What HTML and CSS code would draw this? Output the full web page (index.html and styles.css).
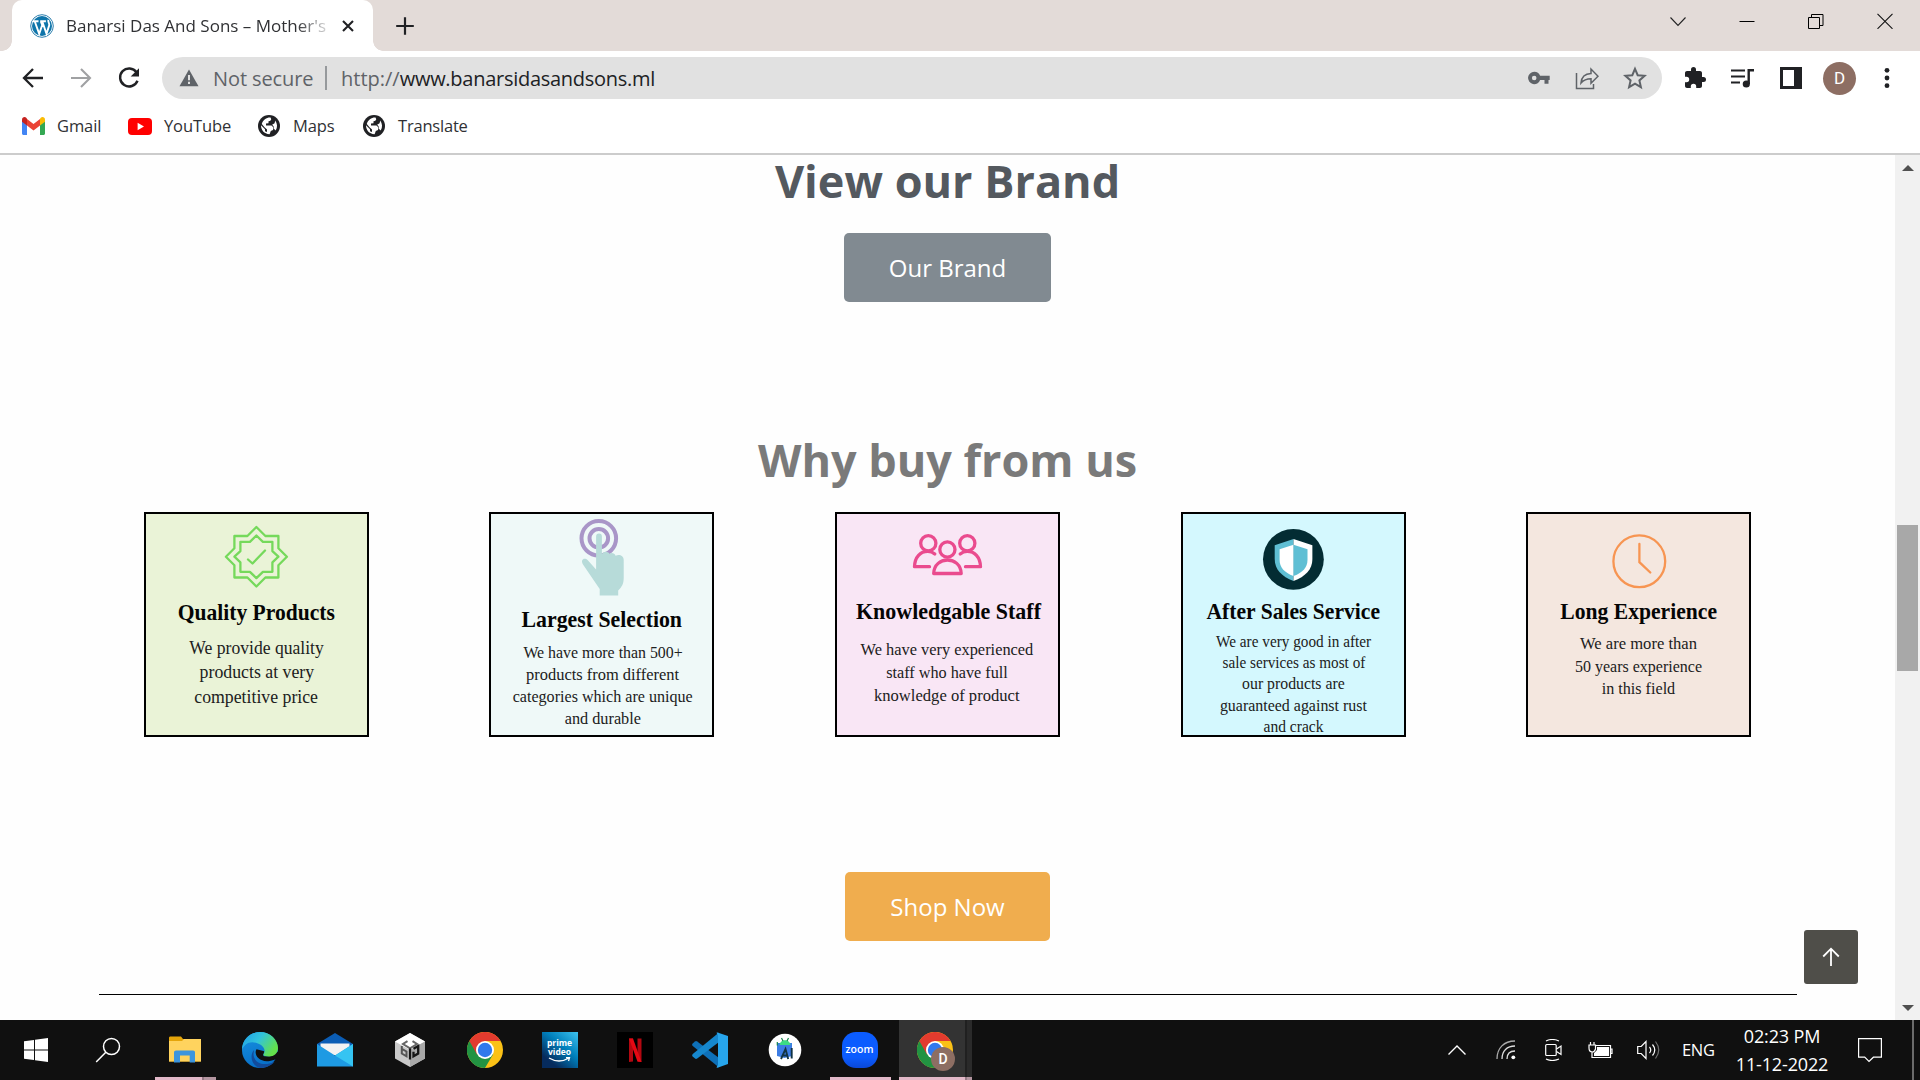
FILE: index.html
```html
<!DOCTYPE html>
<html lang="en">
<head>
<meta charset="utf-8">
<title>Banarsi Das And Sons – Mother's</title>
<link rel="stylesheet" href="styles.css">
</head>
<body>
<div class="screen">
  <header class="tabstrip">
    <div class="tab">
      <svg class="favicon" width="24" height="24" viewBox="0 0 24 24"><circle cx="12" cy="12" r="11.3" fill="#fff" stroke="#2d7fae" stroke-width="1"/><circle cx="12" cy="12" r="10" fill="#0f75aa"/><path d="M2.8 7.3h5.7M10.2 7.3h5.7M4.8 7.5l4.400 12.300 3-8.800-1.400-3.600M12.300 7.500l4.200 12.300 2.700-8.400c.6-2.300-1.600-3.600-.8-5.600" fill="none" stroke="#fff" stroke-width="1.900"/></svg>
      <span class="tab-title">Banarsi Das And Sons – Mother's</span>
      <svg class="tab-close" width="14" height="14" viewBox="0 0 14 14"><path d="M2 2l10 10M12 2L2 12" stroke="#202124" stroke-width="2.100"/></svg>
      <i class="flare left"></i><i class="flare right"></i>
    </div>
    <svg class="new-tab" width="20" height="20" viewBox="0 0 20 20"><path d="M10 1.200v17.600M1.200 10h17.600" stroke="#202124" stroke-width="2.200"/></svg>
    <div class="window-controls">
      <svg width="16" height="16" viewBox="0 0 16 16"><path d="M.5 4.500l7.500 8 7.500-8" fill="none" stroke="#222" stroke-width="1.100"/></svg>
      <svg width="16" height="16" viewBox="0 0 16 16"><path d="M.5 8.500h15" stroke="#000"/></svg>
      <svg width="16" height="16" viewBox="0 0 16 16"><path d="M.5 4.500h11v11h-11zM3.500 4.500v-3h11.500v11h-3.500" fill="none" stroke="#000"/></svg>
      <svg width="16" height="16" viewBox="0 0 16 16"><path d="M.5 .8l15 15M15.500 .8l-15 15" stroke="#111" stroke-width="1.100"/></svg>
    </div>
  </header>

  <div class="toolbar">
    <div class="nav">
      <svg width="24" height="24" viewBox="0 0 24 24"><path d="M22 12H3M12 3l-9 9 9 9" fill="none" stroke="#202124" stroke-width="2.300"/></svg>
      <svg width="24" height="24" viewBox="0 0 24 24"><path d="M2 12h19M12 3l9 9-9 9" fill="none" stroke="#a0a1a3" stroke-width="2.100"/></svg>
      <svg width="24" height="24" viewBox="0 0 24 24"><path d="M19.500 6.300A9 9 0 1 0 20.500 14.700" fill="none" stroke="#202124" stroke-width="2.400"/><path d="M22 2.200v8.300h-8.300z" fill="#202124"/></svg>
    </div>
    <div class="omnibox">
      <svg class="warn" width="20" height="18" viewBox="0 0 20 18"><path d="M10 .5L19.500 17.300H.5z" fill="#5f6368"/><path d="M10 6v5.300M10 12.800v2.300" stroke="#e1e1e1" stroke-width="2"/></svg>
      <span class="not-secure">Not secure</span>
      <span class="divider"></span>
      <span class="url"><span class="scheme">http://</span>www.banarsidasandsons.ml</span>
      <div class="omni-icons">
        <svg width="24" height="24" viewBox="0 0 24 24"><path fill-rule="evenodd" d="M7.200 5.800a6.200 6.200 0 0 1 5.900 4H22.700v4.200h-1.200v3.800h-4v-3.800h-4.400A6.200 6.200 0 1 1 7.200 5.800zm0 3.900a2.300 2.300 0 1 0 0 4.600 2.300 2.300 0 0 0 0-4.600z" fill="#5f6368"/></svg>
        <svg width="24" height="24" viewBox="0 0 24 24"><path d="M1.500 7v15.500h17V18M6 17c.5-6 4-9.300 10-9.500V3l7 7.200-7 7v-4.500c-4.500 0-7.500 1.300-10 4.300z" fill="none" stroke="#5f6368" stroke-width="1.500"/></svg>
        <svg width="24" height="24" viewBox="0 0 24 24"><path d="M12 2.800l2.700 6.400 6.900.6-5.200 4.600 1.500 6.700-5.900-3.500-5.900 3.500 1.500-6.700-5.200-4.600 6.900-.6z" fill="none" stroke="#5f6368" stroke-width="2"/></svg>
      </div>
    </div>
    <div class="actions">
      <svg width="24" height="24" viewBox="0 0 24 24"><path d="M20.500 11H19V7c0-1.100-.9-2-2-2h-4V3.500a2.500 2.500 0 0 0-5 0V5H4c-1.100 0-2 .9-2 2v3.800h1.500a2.700 2.700 0 0 1 0 5.400H2V20c0 1.100.9 2 2 2h3.800v-1.500a2.700 2.700 0 0 1 5.400 0V22H17c1.100 0 2-.9 2-2v-4h1.500a2.500 2.500 0 0 0 0-5z" fill="#202124"/></svg>
      <svg width="26" height="24" viewBox="0 0 26 24"><path d="M2 4.500h14M2 10.500h14M2 16.500h9" stroke="#202124" stroke-width="2.200"/><path d="M19.700 18V4.300h5.300" fill="none" stroke="#202124" stroke-width="2.400"/><circle cx="17.300" cy="18" r="3.600" fill="#202124"/></svg>
      <svg width="22" height="22" viewBox="0 0 22 22"><path fill-rule="evenodd" d="M0 0h22v22H0zM3 3v16h11V3z" fill="#202124"/></svg>
      <span class="avatar">D</span>
      <svg width="6" height="22" viewBox="0 0 6 22"><g fill="#202124"><circle cx="3" cy="3.300" r="2.400"/><circle cx="3" cy="11" r="2.400"/><circle cx="3" cy="18.700" r="2.400"/></g></svg>
    </div>
  </div>

  <nav class="bookmarks">
    <a class="bm gmail"><svg width="23" height="18" viewBox="0 0 23 18"><path d="M0 3v13.500C0 17.300.7 18 1.500 18H5V7z" fill="#4285f4"/><path d="M18 7v11h3.500c.8 0 1.500-.7 1.500-1.500V3z" fill="#34a853"/><path d="M18 2v6.500L23 4.700V2.800C23 .3 20.300-.8 18.500 1z" fill="#fbbc04"/><path d="M5 8.500V2l6.500 5L18 2v6.500l-6.500 5z" fill="#ea4335"/><path d="M0 2.800v1.900l5 3.800V2l-.5-1C2.700-.8 0 .3 0 2.800z" fill="#c5221f"/></svg><span>Gmail</span></a>
    <a class="bm youtube"><svg width="24" height="17" viewBox="0 0 24 17"><rect width="24" height="17" rx="4" fill="#f00"/><path d="M9.600 4.800l6.400 3.700-6.400 3.700z" fill="#fff"/></svg><span>YouTube</span></a>
    <a class="bm maps"><svg width="22" height="22" viewBox="0 0 22 22"><circle cx="11" cy="11" r="11" fill="#202124"/><path d="M12.500 2.600l.7 1.300c0 1.300-.8 2-2.700 2.300v2l-2.500.4v2h5.500l1.500 1.500v3l-2.200.8-1.200 3.300C6 19 3 15 3 10.300l4 4v2l2 .7v-2.500l-2.500-2.200-2.700-3.200C5 5 8.500 2.400 12.500 2.600zM17.200 5.500c2.200 3 2.500 7 .5 10l-1.200-1.200h-.9v-3l-1.500-1.500 2.500-1.500z" fill="#fff"/></svg><span>Maps</span></a>
    <a class="bm translate"><svg width="22" height="22" viewBox="0 0 22 22"><circle cx="11" cy="11" r="11" fill="#202124"/><path d="M12.500 2.600l.7 1.300c0 1.300-.8 2-2.700 2.300v2l-2.500.4v2h5.500l1.500 1.500v3l-2.200.8-1.200 3.300C6 19 3 15 3 10.300l4 4v2l2 .7v-2.500l-2.500-2.200-2.700-3.200C5 5 8.500 2.400 12.500 2.600zM17.200 5.500c2.200 3 2.500 7 .5 10l-1.200-1.200h-.9v-3l-1.500-1.500 2.500-1.500z" fill="#fff"/></svg><span>Translate</span></a>
  </nav>

  <div class="viewport">
    <main class="page">
      <h2 class="heading brand-heading">View our Brand</h2>
      <a class="button brand-button">Our Brand</a>
      <h2 class="heading why-heading">Why buy from us</h2>
      <section class="cards">
        <svg class="card quality" viewBox="0 0 225 225">
          <g fill="none" stroke="#75d95b" stroke-width="2.300" stroke-linejoin="round">
            <path d="M112.400 15l9 9h13v12.200l8.500 8.500-8.500 8.500v12.300h-13l-9 9-9-9h-13V53.200l-8.500-8.500 8.500-8.500V24h13z"/>
            <path d="M112.400 23.500l6.500 6.300h9.500v9.300l6 5.600-6 5.600v9.500h-9.500l-6.500 6.300-6.500-6.300h-9.500v-9.500l-6-5.600 6-5.600v-9.300h9.500z"/>
            <path d="M104 47.500l4.500 4 12.500-13" stroke-linecap="round"/>
          </g>
          <g class="card-title"><text x="33.800" y="108" textLength="157" lengthAdjust="spacingAndGlyphs">Quality Products</text></g>
          <g class="card-copy large">
            <text x="45.300" y="141.700" textLength="134.500" lengthAdjust="spacingAndGlyphs">We provide quality</text>
            <text x="55.600" y="166" textLength="114.500" lengthAdjust="spacingAndGlyphs">products at very</text>
            <text x="50.300" y="190.700" textLength="123.700" lengthAdjust="spacingAndGlyphs">competitive price</text>
          </g>
        </svg>
        <svg class="card selection" viewBox="0 0 225 225">
          <g fill="none" stroke="#a996c8" stroke-width="4"><circle cx="109.800" cy="26.300" r="17.300"/><circle cx="109.800" cy="26.300" r="9.300"/></g>
          <path d="M107.100 24.500a2.900 2.900 0 0 1 5.800 0V42c2-3 6-3 7.500-.3 2.600-1.600 5.200-.4 6.200 2 3.600-2 8.100 0 8.100 4V66c0 6-2 9-5.500 12.500V83.500H110.700V77L94 52.500c-3-5 1.500-7.500 4.800-4.200l8.300 9.200z" fill="#b7dbd9"/>
          <g class="card-title"><text x="32.500" y="115.300" textLength="160.500" lengthAdjust="spacingAndGlyphs">Largest Selection</text></g>
          <g class="card-copy">
            <text x="34.400" y="146.300" textLength="159.300" lengthAdjust="spacingAndGlyphs">We have more than 500+</text>
            <text x="37.100" y="168.300" textLength="153" lengthAdjust="spacingAndGlyphs">products from different</text>
            <text x="23.700" y="190.300" textLength="180" lengthAdjust="spacingAndGlyphs">categories which are unique</text>
            <text x="75.700" y="212.300" textLength="76.300" lengthAdjust="spacingAndGlyphs">and durable</text>
          </g>
        </svg>
        <svg class="card staff" viewBox="0 0 225 225">
          <g fill="none" stroke="#ea4b8e" stroke-width="3.300" stroke-linecap="round" stroke-linejoin="round">
            <circle cx="93.300" cy="31.300" r="7.600"/><circle cx="132.300" cy="31.300" r="7.600"/><circle cx="112.400" cy="37.500" r="7.600"/>
            <path d="M94.500 54.700H79.500c.3-10 6-15.300 13.300-15.300q4 0 7 2.500M130.500 54.700h15c-.3-10-6-15.300-13.300-15.300q-4 0-7 2.500M98.700 61.500c.5-18 27-18 27.500 0z"/>
          </g>
          <g class="card-title"><text x="21" y="107" textLength="185" lengthAdjust="spacingAndGlyphs">Knowledgable Staff</text></g>
          <g class="card-copy">
            <text x="25.600" y="143.300" textLength="172.700" lengthAdjust="spacingAndGlyphs">We have very experienced</text>
            <text x="51.200" y="166.300" textLength="121.700" lengthAdjust="spacingAndGlyphs">staff who have full</text>
            <text x="39" y="189" textLength="145.500" lengthAdjust="spacingAndGlyphs">knowledge of product</text>
          </g>
        </svg>
        <svg class="card service" viewBox="0 0 225 225">
          <circle cx="112.400" cy="47.300" r="30.400" fill="#032c33"/>
          <path d="M112.500 27L93.700 33.300V47c0 10.500 7 17.500 18.800 22z" fill="#5fbfd4"/>
          <path d="M112.500 27l18.900 6.300V47c0 10.500-7 17.500-18.900 22z" fill="#fff"/>
          <path d="M112.500 32.700l-13.900 4.500v10.500c0 7.500 4.500 12.800 13.900 16.300z" fill="#fff"/>
          <path d="M112.500 32.700l14 4.500v10.500c0 7.500-4.500 12.800-14 16.300z" fill="#5fbfd4"/>
          <g class="card-title"><text x="25.500" y="106.700" textLength="173.500" lengthAdjust="spacingAndGlyphs">After Sales Service</text></g>
          <g class="card-copy">
            <text x="35.100" y="134.700" textLength="155" lengthAdjust="spacingAndGlyphs">We are very good in after</text>
            <text x="41.600" y="156" textLength="142.700" lengthAdjust="spacingAndGlyphs">sale services as most of</text>
            <text x="61.100" y="177.300" textLength="102.600" lengthAdjust="spacingAndGlyphs">our products are</text>
            <text x="38.900" y="198.700" textLength="147" lengthAdjust="spacingAndGlyphs">guaranteed against rust</text>
            <text x="82.500" y="219.700" textLength="60" lengthAdjust="spacingAndGlyphs">and crack</text>
          </g>
        </svg>
        <svg class="card experience" viewBox="0 0 225 225">
          <g fill="none" stroke="#f79552" stroke-width="2.300" stroke-linecap="round"><circle cx="113.300" cy="49.300" r="25.900"/><path d="M113.400 32v18.200l10.900 10.300"/></g>
          <g class="card-title"><text x="34.300" y="106.700" textLength="156.700" lengthAdjust="spacingAndGlyphs">Long Experience</text></g>
          <g class="card-copy">
            <text x="54" y="137.300" textLength="117" lengthAdjust="spacingAndGlyphs">We are more than</text>
            <text x="49" y="160" textLength="127" lengthAdjust="spacingAndGlyphs">50 years experience</text>
            <text x="75.700" y="182.300" textLength="73.500" lengthAdjust="spacingAndGlyphs">in this field</text>
          </g>
        </svg>
      </section>
      <a class="button shop-button">Shop Now</a>
      <hr class="rule">
      <a class="to-top"><svg width="18" height="20" viewBox="0 0 18 20"><path d="M9 19V2M1.200 9.500L9 1.700l7.800 7.800" fill="none" stroke="#fff" stroke-width="1.800"/></svg></a>
    </main>
    <div class="scrollbar">
      <svg width="12" height="6" viewBox="0 0 12 6"><path d="M0 6L6 0l6 6z" fill="#505050"/></svg>
      <span class="thumb"></span>
      <svg class="down" width="12" height="6" viewBox="0 0 12 6"><path d="M0 0l6 6 6-6z" fill="#505050"/></svg>
    </div>
  </div>

  <footer class="taskbar">
    <div class="slot system"><svg width="24" height="24" viewBox="0 0 24 24"><path d="M0 3.300L10 2v9.500H0zM11 1.800L24 0v11.500H11zM0 12.500h10V22L0 20.700zM11 12.500h13V24l-13-1.800z" fill="#fff"/></svg></div>
    <div class="slot system"><svg width="26" height="26" viewBox="0 0 26 26"><circle cx="16.500" cy="9.500" r="8" fill="none" stroke="#fff" stroke-width="1.500"/><path d="M10.800 15.300L1.200 25" stroke="#fff" stroke-width="1.500"/></svg></div>
    <div class="apps">
      <div class="slot explorer"><svg width="32" height="28" viewBox="0 0 32 28"><path d="M0 2C0 1 .5.500 1.500.500H12l2 2.500h17c.7 0 1 .5 1 1v21.500H0z" fill="#e5a50a"/><path d="M0 5h13l2-2h17v22.500H0z" fill="#ffd35e"/><path d="M5 26.500V16.500c0-1.300.8-2 2-2h17c1.300 0 2 .7 2 2v10h-5.300V19.500H11v7z" fill="#3d95dd"/></svg></div>
      <div class="slot"><svg width="36" height="36" viewBox="0 0 36 36"><defs><linearGradient id="edgeTop" x1="0" x2="1" y2=".5"><stop stop-color="#1c9be8"/><stop offset=".5" stop-color="#32c4db"/><stop offset="1" stop-color="#63e14c"/></linearGradient><linearGradient id="edgeSide" y2="1" x2=".3"><stop stop-color="#1792e0"/><stop offset="1" stop-color="#0870c9"/></linearGradient></defs><circle cx="18" cy="18" r="18" fill="url(#edgeSide)"/><path d="M11.500 22c0 8 9 13.500 21.500 7.500C29 34 23 36 18 36 10 34 7 24 12 18z" fill="#124b9b"/><path d="M14.500 17.200c-3 5 2 13 12 12 3.500-.3 5.500-1.300 7.300-2.200L31.500 31 37 26v-7l-8.500 5.200H22c-1.800-1 0-2.500.2-5z" fill="#101010"/><path d="M0 18C0 7 8.500 0 18 0c10 0 18 7.500 18 16 0 5-4 8.500-9 8.500-4.500 0-6.300-1-5.300-2.400 2-2.900 1-8.100-5.700-10.600C8 8 2 12 0 18z" fill="url(#edgeTop)"/></svg></div>
      <div class="slot"><svg width="36" height="34" viewBox="0 0 36 34"><path d="M0 11L18 0l18 11v5H0z" fill="#0b5db5"/><path d="M3.500 10.500h29V22h-29z" fill="#f2f2f2"/><path d="M0 11l18 11.500L36 11v22.500H0z" fill="#1e9ae3"/><path d="M18 22.500L36 11v22.500z" fill="#35c4f2"/></svg></div>
      <div class="slot"><svg width="30" height="34" viewBox="0 0 30 34"><path d="M15 0l15 8.500v17L15 34 0 25.500v-17z" fill="#c9c9c9"/><path d="M15 0l15 8.500L15 17 0 8.500z" fill="#fff"/><path d="M15 17l15-8.500v17L15 34z" fill="#a8a8a8"/><path d="M12.500 8.200L8 11l7 4.300 7-4.300-4.500-2.800" fill="none" stroke="#666" stroke-width="2"/><path d="M6.800 13v7.500l4.700 2.800v-4.800l-4.700-2.700" fill="none" stroke="#555" stroke-width="2"/><path d="M15 15.500v11M18.500 18.800v4.500l4.700-2.800V13l-4.700 2.700" fill="none" stroke="#151515" stroke-width="2.300"/></svg></div>
      <div class="slot"><svg width="36" height="36" viewBox="0 0 36 36"><circle cx="18" cy="18" r="18" fill="#fbc116"/><path d="M2.400 9A18 18 0 0 0 18 36l8-13.500-8-4.500z" fill="#229342"/><path d="M2.400 9A18 18 0 0 1 33.600 9H18l-8 13.500z" fill="#e33b2e"/><circle cx="18" cy="18" r="9" fill="#fff"/><circle cx="18" cy="18" r="7.200" fill="#3079ed"/></svg></div>
      <div class="slot"><div class="prime"><span>prime</span><span>video</span><svg width="24" height="6" viewBox="0 0 24 6"><path d="M1 1q10 6 20 0M18 .7h3.500L20.500 4" fill="none" stroke="#fff" stroke-width="1.300"/></svg></div></div>
      <div class="slot"><svg width="36" height="36" viewBox="0 0 36 36"><path d="M0 0h36v36H0z" fill="#000"/><path d="M12 6.500h4v23l-4 .5zM20.500 6.500h4V30l-4-.5z" fill="#b20710"/><path d="M12 6.500h4L24.500 30l-4-.5z" fill="#e50914"/></svg></div>
      <div class="slot"><svg width="36" height="36" viewBox="0 0 36 36"><path d="M.7 11.500L3 9.500q1-.8 2.200 0L27 26v9.500L.8 14q-1.300-1.300-.1-2.500z" fill="#0e70b8"/><path d="M.7 24.500L3 26.500q1 .8 2.200 0L27 10V.5L.8 22q-1.300 1.300-.1 2.500z" fill="#1687cd"/><path d="M25.500.5L36 4v28l-10.500 3.700c-1 .3-1.500 0 .5-2.700V3c-2-2.500-1.500-2.800-.5-2.500z" fill="#27a5ec"/></svg></div>
      <div class="slot"><svg width="34" height="34" viewBox="0 0 34 34"><circle cx="17" cy="17" r="16.300" fill="#fff"/><path d="M9 10h15v13l-7.500 2L9 23z" fill="#3d7de4"/><path d="M11.500 12c.5-6.500 10.500-6.500 11 0z" fill="#3ddc84"/><path d="M13.500 5l1.500 3M20.500 5L19 8M9.300 9v3.500" stroke="#17864b" stroke-width="1.200"/><path d="M13 26l4.500-10 2.700 10M15 22.500h4.500M23.700 15v10.500" stroke="#113344" stroke-width="1.900" fill="none"/></svg></div>
      <div class="slot zoom"><span class="zoom-logo">zoom</span></div>
      <div class="slot chrome-active"><svg width="36" height="36" viewBox="0 0 36 36"><circle cx="18" cy="18" r="18" fill="#fbc116"/><path d="M2.400 9A18 18 0 0 0 18 36l8-13.500-8-4.500z" fill="#229342"/><path d="M2.400 9A18 18 0 0 1 33.600 9H18l-8 13.500z" fill="#e33b2e"/><circle cx="18" cy="18" r="9" fill="#fff"/><circle cx="18" cy="18" r="7.200" fill="#3079ed"/></svg><span class="profile-badge">D</span></div>
    </div>
    <div class="tray">
      <svg class="t-up" width="18" height="10" viewBox="0 0 18 10"><path d="M.5 9.500L9 1l8.500 8.500" fill="none" stroke="#fff" stroke-width="1.400"/></svg>
      <svg class="t-wifi" width="20" height="20" viewBox="0 0 20 20"><g fill="none" stroke="#ddd" stroke-width="1.300"><path d="M1 19C1 8 8 1 19 1" opacity=".75"/><path d="M6 19c0-8 5-13 13-13M11 19c0-5 3-8 8-8"/></g><circle cx="17.300" cy="17.300" r="1.900" fill="#fff"/></svg>
      <svg class="t-meet" width="17" height="22" viewBox="0 0 17 22"><g fill="none" stroke="#fff" stroke-width="1.200"><rect x=".7" y="5.500" width="10.500" height="11" rx="1"/><path d="M11.500 10l4.500-3v8.500l-4.500-3M1 2q6-3 13 0M1 20q6 3 13 0"/></g></svg>
      <svg class="t-batt" width="25" height="17" viewBox="0 0 25 17"><path d="M8 3.500h14.500v12H4V10M22.500 7h1.500v4.500h-1.500M2.500 0v3M6 0v3M1 3h6.500v4q-1 3-3.200 3Q1 10 1 6z" fill="none" stroke="#fff" stroke-width="1.200"/><path d="M9 5h12v9H6v-3l3-3z" fill="#fff"/></svg>
      <svg class="t-sound" width="23" height="20" viewBox="0 0 23 20"><g fill="none" stroke="#fff" stroke-width="1.200"><path d="M.7 6.500h3.500L9 1.500v17L4.200 13.500H.7zM12.500 7q2.500 3 0 6M15.500 4.500q4.500 5.500 0 11"/><path d="M18.500 1.500q6.500 8.500 0 17" opacity=".4"/></g></svg>
      <span class="lang">ENG</span>
      <div class="clock"><span>02:23 PM</span><span class="date">11-12-2022</span></div>
      <svg class="t-note" width="24" height="25" viewBox="0 0 24 25"><path d="M.6.600h22.800v18.600h-8L11 23.500l-4.300-4.300H.6z" fill="none" stroke="#fff" stroke-width="1.200"/></svg>
      <span class="show-desktop"></span>
    </div>
  </footer>
</div>
</body>
</html>
```
FILE: styles.css
```css
* { box-sizing: border-box; }
body { margin: 0; font-family: "Open Sans", "Noto Sans", sans-serif; background: #fff; overflow: hidden; }
svg { display: block; flex: none; }
.screen { width: 1920px; height: 1080px; display: flex; flex-direction: column; overflow: hidden; }

/* Tab strip */
.tabstrip { height: 51px; flex: none; background: #e3dbd8; display: flex; align-items: center; padding-left: 12px; }
.tab { position: relative; width: 361px; height: 51px; background: #fff; border-radius: 10px 10px 0 0; display: flex; align-items: center; padding-left: 18px; }
.tab-title { width: 262px; margin-left: 12px; font-size: 17px; color: #303134; white-space: nowrap; overflow: hidden; -webkit-mask-image: linear-gradient(90deg, #000 88%, transparent 102%); mask-image: linear-gradient(90deg, #000 88%, transparent 102%); }
.tab-close { margin-left: 13px; }
.flare { position: absolute; bottom: 0; width: 10px; height: 10px; }
.flare.left { left: -10px; background: radial-gradient(circle at 0 0, transparent 9.500px, #fff 10px); }
.flare.right { right: -10px; background: radial-gradient(circle at 100% 0, transparent 9.500px, #fff 10px); }
.new-tab { margin-left: 22px; }
.window-controls { margin: 0 27px 9px auto; display: flex; gap: 53px; }

/* Address row */
.toolbar { height: 54px; flex: none; display: flex; align-items: center; background: #fff; }
.nav { display: flex; gap: 24px; padding-left: 21px; width: 162px; }
.omnibox { width: 1500px; height: 42px; border-radius: 21px; background: #e1e1e1; display: flex; align-items: center; padding: 0 15px 0 17px; font-size: 20px; white-space: nowrap; }
.not-secure { width: 100px; margin-left: 14px; color: #5f6368; letter-spacing: -.1px; }
.divider { width: 2px; height: 24px; margin: 0 14px 0 12px; background: #96999c; }
.url { color: #202124; letter-spacing: -.27px; }
.scheme { color: #5f6368; letter-spacing: 0; }
.omni-icons { margin-left: auto; display: flex; gap: 24px; }
.actions { display: flex; align-items: center; flex: 1; padding-left: 21px; }
.actions svg:nth-child(2) { margin-left: 22px; }
.actions svg:nth-child(3) { margin-left: 25px; }
.actions svg:nth-child(5) { margin-left: 28px; }
.avatar { width: 33px; height: 33px; margin-left: 21px; border-radius: 50%; background: #8d6e63; color: #fff; font: 17px/33px Roboto, sans-serif; text-align: center; }

/* Bookmarks */
.bookmarks { height: 50px; flex: none; display: flex; align-items: center; padding: 0 0 6px 22px; background: #fff; border-bottom: 2px solid #ccc; font-size: 16.500px; color: #303134; }
.bm { display: flex; align-items: center; gap: 12px; letter-spacing: -.1px; }
.bm span { padding-bottom: 2px; }
.gmail { width: 106px; }
.youtube { width: 130px; }
.maps { width: 105px; gap: 13px; }
.translate { gap: 13px; letter-spacing: -.2px; }

/* Web page */
.viewport { height: 865px; flex: none; display: flex; }
.page { position: relative; width: 1895px; background: #fefefe; display: flex; flex-direction: column; align-items: center; overflow: hidden; }
.heading { margin: 0; font-size: 45px; line-height: 54px; font-weight: 700; }
.brand-heading { line-height: 51px; color: #54595f; }
.why-heading { margin-top: 131px; color: #7a7a7a; }
.button { height: 69px; border-radius: 5px; color: #fff; font-size: 24px; line-height: 69px; text-align: center; flex: none; }
.brand-button { width: 207px; margin-top: 27px; background: #818a91; }
.shop-button { width: 205px; margin-top: 135px; background: #f0ad4e; }
.cards { width: 1607px; margin-top: 25px; display: grid; grid-template-columns: 345px 346px 346px 345px 225px; margin-right: 1px; }
.card { width: 225px; height: 225px; outline: 2px solid #000; outline-offset: -2px; }
.quality { background: #eaf3d7; }
.selection { background: #eff9f8; }
.staff { background: #f9e6f5; }
.service { background: #d4f8fe; }
.experience { background: #f4e7df; }
.card text { font-family: "Liberation Serif", serif; }
.card-title { font-size: 23px; font-weight: 700; fill: #050505; }
.card-copy { font-size: 17.500px; fill: #202020; }
.card-copy.large { font-size: 19px; }
.rule { width: 1698px; height: 1px; margin: 53px 0 0; border: 0; background: #000; flex: none; }
.to-top { position: absolute; right: 37px; bottom: 36px; width: 54px; height: 54px; border-radius: 3px; background: #4f4e49; display: flex; align-items: center; justify-content: center; }
.scrollbar { width: 25px; background: #f1f1f1; display: flex; flex-direction: column; align-items: center; padding: 10px 0 9px; }
.thumb { width: 21px; height: 146px; margin-top: 354px; background: #a8a8a8; }
.down { margin-top: auto; }

/* Taskbar */
.taskbar { height: 60px; flex: none; background: #101010; display: flex; color: #fff; }
.slot { width: 75px; height: 60px; display: flex; align-items: center; justify-content: center; position: relative; flex: none; }
.slot.system { width: 72px; }
.apps { display: flex; margin-left: 3px; }
.explorer { background: linear-gradient(90deg, #e2b8c8 47px, #967a85 47px 48.500px, #b496a1 48.500px) 8px 57px / 61px 3px no-repeat; }
.zoom { background: linear-gradient(#e2b8c8, #e2b8c8) 8px 57px / 61px 3px no-repeat; }
.chrome-active { background: linear-gradient(90deg, #e2b8c8 66px, #967a85 66px 68px, #b496a1 68px) 2px 57px / 73px 3px no-repeat, linear-gradient(90deg, #333 66px, #202020 66px 68px, #2a2a2a 68px) 2px 0 / 73px 60px no-repeat; }
.prime { width: 36px; height: 36px; display: flex; flex-direction: column; align-items: center; padding-top: 6px; background: linear-gradient(40deg, #062b5d 20%, #0081bd 60%, #3dc2ee); font: 700 8.500px/9px "Open Sans", sans-serif; }
.prime svg { margin-top: 1px; }
.zoom-logo { width: 36px; height: 36px; border-radius: 14px; background: linear-gradient(#0b5cff 70%, #0b48d8); font: 600 10.500px/34px "Open Sans", sans-serif; text-align: center; }
.profile-badge { position: absolute; left: 34px; top: 27px; width: 24px; height: 24px; border-radius: 50%; background: #8d6e63; font: 500 14px/24px Roboto, sans-serif; text-align: center; }
.tray { margin-left: auto; display: flex; align-items: center; height: 60px; }
.t-wifi { margin-left: 30px; }
.t-meet { margin-left: 29px; }
.t-batt { margin-left: 26px; }
.t-sound { margin-left: 24px; }
.lang { width: 33px; margin-left: 22px; padding-bottom: 1px; font-size: 16.500px; white-space: nowrap; letter-spacing: -.3px; }
.clock { width: 94px; margin-left: 20px; height: 60px; padding-top: 2px; display: flex; flex-direction: column; align-items: center; font-size: 18px; line-height: 28px; letter-spacing: -.15px; white-space: nowrap; }
.t-note { margin-left: 29px; }
.show-desktop { width: 2px; height: 60px; margin: 0 6px 0 30px; background: #6b6b6b; }
```
